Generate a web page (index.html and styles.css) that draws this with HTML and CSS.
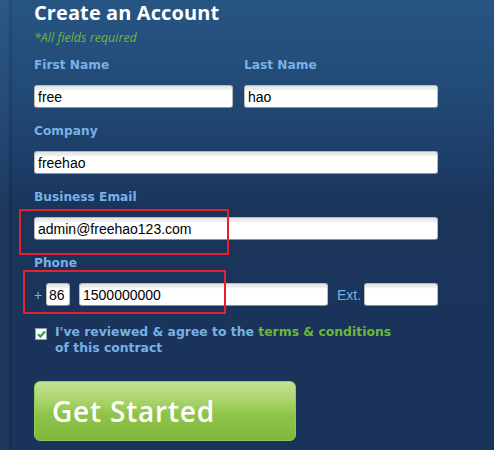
FILE: index.html
```html
<!DOCTYPE html>
<html>
<head>
<meta charset="utf-8">
<link rel="stylesheet" href="styles.css">
</head>
<body>
<div class="page">
  <form class="signup">
    <h1 class="title">Create an Account</h1>
    <p class="required">*All fields required</p>

    <div class="row">
      <div class="field first">
        <label class="label">First Name</label>
        <input class="input" type="text" value="free">
      </div>
      <div class="field last">
        <label class="label">Last Name</label>
        <input class="input" type="text" value="hao">
      </div>
    </div>

    <div class="field">
      <label class="label">Company</label>
      <input class="input full" type="text" value="freehao">
    </div>

    <div class="field">
      <label class="label">Business Email</label>
      <input class="input full" type="text" value="admin@freehao123.com">
    </div>

    <div class="field">
      <label class="label">Phone</label>
      <div class="phone">
        <span class="plus">+</span>
        <input class="input code" type="text" value="86">
        <input class="input number" type="text" value="1500000000">
        <span class="ext">Ext.</span>
        <input class="input extnum" type="text" value="">
      </div>
    </div>

    <div class="agree">
      <span class="check">
        <svg width="9" height="8" viewBox="0 0 9 8"><path d="M1 4.2 L3.4 6.5 L8 1.5" fill="none" stroke="#2fa32f" stroke-width="2.2"/></svg>
      </span>
      <p class="agree-text">I've reviewed &amp; agree to the <span class="terms">terms &amp; conditions</span><br>of this contract</p>
    </div>

    <button class="cta" type="button">Get Started</button>

    <div class="mark mark-email"></div>
    <div class="mark mark-phone"></div>
  </form>
</div>
</body>
</html>
```

FILE: styles.css
```css
html, body {
  margin: 0;
  padding: 0;
}
body {
  width: 494px;
  height: 450px;
  overflow: hidden;
  background:
    linear-gradient(to right, rgba(255,255,255,0.02) 0 9px, rgba(0,0,0,0.12) 9px 12px, transparent 12px),
    linear-gradient(to bottom, #275583 0px, #224a76 90px, #1c3c66 170px, #1a345a 210px, #19335a 450px);
  font-family: "Liberation Sans", Arial, sans-serif;
}
.page {
  padding-left: 34px;
}
.signup {
  position: relative;
  width: 404px;
}
.title {
  margin: 0;
  padding-top: 1px;
  font-family: "Open Sans", "DejaVu Sans", sans-serif;
  font-weight: 700;
  font-size: 20px;
  line-height: 24px;
  color: #ffffff;
  letter-spacing: 0.1px;
}
.required {
  margin: 5px 0 0;
  font-family: "Open Sans", sans-serif;
  font-style: italic;
  font-size: 12.5px;
  line-height: 16px;
  color: #6cb83a;
}
.row {
  display: flex;
  gap: 11px;
  margin-top: 11px;
}
.field {
  display: flex;
  flex-direction: column;
  margin-bottom: 15px;
}
.first { width: 199px; }
.last { width: 194px; }
.label {
  display: block;
  font-family: "DejaVu Sans", Verdana, sans-serif;
  font-weight: 700;
  font-size: 12.2px;
  line-height: 16px;
  color: #78b1e6;
  margin-bottom: 12px;
}
.input {
  box-sizing: border-box;
  height: 23px;
  margin: 0;
  padding: 1px 3px 0;
  border: 1px solid #b9b9b9;
  border-bottom-color: #8f8f8f;
  border-radius: 3px;
  background: linear-gradient(to bottom, #e6e6e6 0, #ececec 3px, #ffffff 5px);
  font-family: "Liberation Sans", Arial, sans-serif;
  font-size: 14px;
  color: #000;
  outline: none;
  width: 100%;
}
.full { width: 404px; }
.phone {
  display: flex;
  align-items: center;
}
.plus {
  width: 12px;
  font-size: 14px;
  color: #78b1e6;
}
.code { width: 24px; padding: 1px 2px 0; }
.number { width: 249px; margin-left: 9px; }
.ext {
  margin-left: 9px;
  width: 27px;
  font-size: 14px;
  color: #78b1e6;
}
.extnum { width: 74px; }
.agree {
  display: flex;
  align-items: flex-start;
  margin-top: 18px;
}
.check {
  box-sizing: border-box;
  width: 12px;
  height: 12px;
  margin: 4px 0 0 1px;
  background: #fff;
  border: 1px solid #8c9bb0;
  display: flex;
  align-items: center;
  justify-content: center;
}
.agree-text {
  margin: 0 0 0 8px;
  font-family: "DejaVu Sans", Verdana, sans-serif;
  font-weight: 700;
  font-size: 12.4px;
  line-height: 16px;
  color: #78b1e6;
}
.terms { color: #6cb83a; }
.cta {
  display: block;
  margin-top: 25px;
  width: 262px;
  height: 60px;
  padding: 0 0 0 17px;
  text-align: left;
  border: 1px solid #93c75a;
  border-radius: 6px;
  background: linear-gradient(to bottom, #c3e28f 0%, #a7d267 35%, #8fc44a 55%, #80b83c 100%);
  font-family: "Open Sans", sans-serif;
  font-weight: 600;
  font-size: 28px;
  color: #ffffff;
  letter-spacing: 0.8px;
}
.mark {
  position: absolute;
  border: 2px solid #e8202a;
  box-sizing: border-box;
}
.mark-email {
  left: -15px;
  top: 209px;
  width: 210px;
  height: 46px;
}
.mark-phone {
  left: -11px;
  top: 270px;
  width: 203px;
  height: 44px;
}
```
